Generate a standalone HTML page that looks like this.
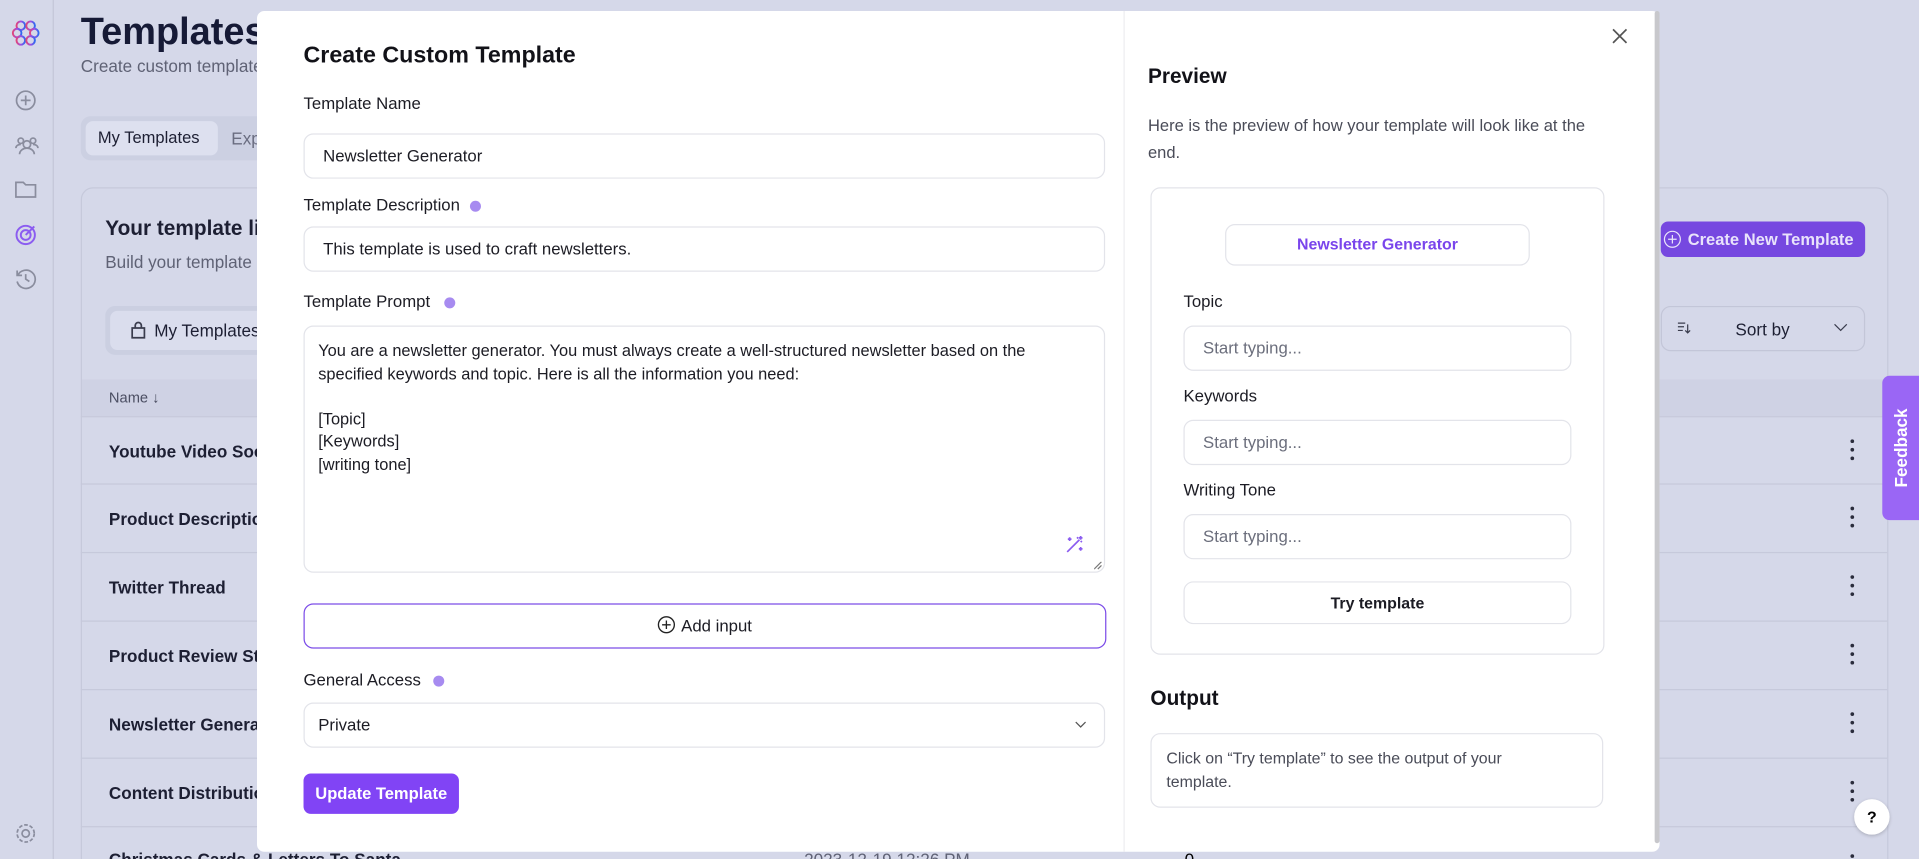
<!DOCTYPE html>
<html><head><meta charset="utf-8">
<style>
*{box-sizing:border-box;margin:0;padding:0;white-space:nowrap}
html,body{width:1919px;height:859px;overflow:hidden;background:#d5d8e9;font-family:"Liberation Sans",sans-serif;}
#root{position:absolute;left:0;top:0;width:1568px;height:702px;transform:scale(1.22385);transform-origin:0 0;background:#d5d8e9;overflow:hidden}
.a{position:absolute}
.sb{left:0;top:0;width:44px;height:702px;border-right:1px solid #c3c6d8;}
.ic{stroke:#8a8d9e;fill:none;stroke-width:1.4}
.row{left:66px;width:1476px;height:56px;border-top:1px solid #c6c9db;}
.rt{position:absolute;left:23px;top:20px;font-size:14px;font-weight:bold;color:#1d1f33;}
.keb{position:absolute;left:1446px;top:18px;width:3px;}
.keb i{display:block;width:3px;height:3px;background:#2a2c3c;border-radius:2px;margin-bottom:4px}
.modal{left:210px;top:9px;width:1146px;height:687px;background:#fff;border-radius:6px;}
.lbl{font-size:13.7px;color:#1c1c24;}
.inp{border:1px solid #e3e4ea;border-radius:8px;background:#fff;font-size:13.7px;color:#1c1c24;}
.dot{display:inline-block;width:9px;height:9px;border-radius:50%;background:#a78bf0;vertical-align:middle;margin-left:8px;}
.ph{color:#6b6e7c}
.wrap{white-space:normal}
</style></head><body><div id="root">
<div class="a sb"></div>
<svg class="a" style="left:9px;top:15px" width="24" height="24" viewBox="0 0 24 24"><defs><linearGradient id="g" x1="0" x2="1"><stop offset="0" stop-color="#e0457b"/><stop offset=".5" stop-color="#9b4ee6"/><stop offset="1" stop-color="#2f6bf0"/></linearGradient></defs><g fill="none" stroke="url(#g)" stroke-width="1.6"><circle cx="8" cy="6" r="3.5"/><circle cx="16" cy="6" r="3.5"/><circle cx="5" cy="12" r="3.5"/><circle cx="19" cy="12" r="3.5"/><circle cx="8" cy="18" r="3.5"/><circle cx="16" cy="18" r="3.5"/></g></svg>
<svg class="a" style="left:12px;top:73px" width="18" height="18"><circle class="ic" cx="9" cy="9" r="7.5"/><path class="ic" d="M9 5v8M5 9h8"/></svg>
<svg class="a" style="left:12px;top:110px" width="20" height="18"><circle class="ic" cx="10" cy="8" r="3"/><circle class="ic" cx="5" cy="5" r="2.2"/><circle class="ic" cx="15" cy="5" r="2.2"/><path class="ic" d="M4 16c0-3 3-5 6-5s6 2 6 5M1 11c0-2 2-3 4-3M19 11c0-2-2-3-4-3"/></svg>
<svg class="a" style="left:12px;top:147px" width="18" height="16"><path class="ic" d="M1 2h6l2 2h8v10H1z"/></svg>
<svg class="a" style="left:12px;top:183px" width="18" height="18"><circle cx="9" cy="9" r="7.5" fill="none" stroke="#8b5cf0" stroke-width="1.6"/><circle cx="9" cy="9" r="4" fill="none" stroke="#8b5cf0" stroke-width="1.6"/><path d="M9 9l7-7" stroke="#8b5cf0" stroke-width="1.6"/></svg>
<svg class="a" style="left:12px;top:219px" width="18" height="18"><path class="ic" d="M2.5 6A7.5 7.5 0 1 1 2 11M2 2v4h4M9 5v4l3 2"/></svg>
<svg class="a" style="left:12px;top:672px" width="18" height="18"><circle class="ic" cx="9" cy="9" r="3"/><circle class="ic" cx="9" cy="9" r="7" stroke-dasharray="3 1.5"/></svg>

<div class="a" style="left:66px;top:8px;font-size:31px;font-weight:bold;color:#161a36">Templates</div>
<div class="a" style="left:66px;top:46px;font-size:14px;color:#5f6275">Create custom templates</div>
<div class="a" style="left:66px;top:95px;width:200px;height:36px;background:#ccd0e2;border-radius:8px"></div>
<div class="a" style="left:70px;top:99px;width:108px;height:28px;background:#dde0ef;border-radius:6px;font-size:13.5px;color:#1d1f33;padding:6px 10px">My Templates</div>
<div class="a" style="left:189px;top:105px;font-size:14px;color:#6a6d80">Exp</div>

<div class="a" style="left:66px;top:153px;width:1477px;height:560px;border:1px solid #c6c9db;border-radius:10px"></div>
<div class="a" style="left:86px;top:177px;font-size:17px;font-weight:bold;color:#1d1f33">Your template library</div>
<div class="a" style="left:86px;top:206px;font-size:14px;color:#5f6275">Build your template library</div>
<div class="a" style="left:86px;top:250px;width:200px;height:40px;background:#cbcfe1;border-radius:8px"></div>
<div class="a" style="left:90px;top:254px;width:200px;height:32px;background:#dadded;border-radius:6px;font-size:14px;color:#1d1f33;padding:8px 0 0 36px">My Templates</div>
<svg class="a" style="left:106px;top:262px" width="14" height="15"><path class="ic" d="M2 6h10v8H2zM4.5 6V4a2.5 2.5 0 0 1 5 0v2" style="stroke:#3a3c4d"/></svg>
<div class="a" style="left:1357px;top:181px;width:167px;height:29px;background:#7648e0;border-radius:6px;color:#e9e3fb;font-size:13.5px;font-weight:bold;padding:7px 0 0 22px">Create New Template</div>
<svg class="a" style="left:1359px;top:188px" width="15" height="15"><circle cx="7.5" cy="7.5" r="6.5" fill="none" stroke="#e9e3fb"/><path d="M7.5 4v7M4 7.5h7" stroke="#e9e3fb"/></svg>
<div class="a" style="left:1357px;top:250px;width:167px;height:37px;border:1px solid #c3c6d8;border-radius:8px;font-size:14px;color:#1d1f33;padding:10px 0 0 60px">Sort by</div>
<svg class="a" style="left:1370px;top:262px" width="12" height="12"><path d="M1 2h6M1 5h5M1 8h4M9 3v7M7 8l2 2 2-2" stroke="#3a3c4d" fill="none"/></svg>
<svg class="a" style="left:1498px;top:264px" width="12" height="8"><path d="M1 1l5 5 5-5" stroke="#3a3c4d" fill="none"/></svg>
<div class="a" style="left:67px;top:310px;width:1475px;height:30px;background:#cfd2e4"></div>
<div class="a" style="left:89px;top:318px;font-size:12px;color:#4b4e62">Name &#8595;</div>
<div class="a row" style="top:340px"><span class="rt">Youtube Video Social</span><div class="keb"><i></i><i></i><i></i></div></div>
<div class="a row" style="top:395px"><span class="rt">Product Description</span><div class="keb"><i></i><i></i><i></i></div></div>
<div class="a row" style="top:451px"><span class="rt">Twitter Thread</span><div class="keb"><i></i><i></i><i></i></div></div>
<div class="a row" style="top:507px"><span class="rt">Product Review Structure</span><div class="keb"><i></i><i></i><i></i></div></div>
<div class="a row" style="top:563px"><span class="rt">Newsletter Generator</span><div class="keb"><i></i><i></i><i></i></div></div>
<div class="a row" style="top:619px"><span class="rt">Content Distribution</span><div class="keb"><i></i><i></i><i></i></div></div>
<div class="a row" style="top:675px"><span class="rt" style="top:18px">Christmas Cards &amp; Letters To Santa</span><span style="position:absolute;left:591px;top:18px;font-size:14px;color:#5f6275">2023-12-19 12:26 PM</span><span style="position:absolute;left:902px;top:18px;font-size:14px">0</span><div class="keb" style="top:22px"><i></i><i></i><i></i></div></div>

<div class="a" style="left:1538px;top:307px;width:30px;height:118px;background:#9a66f5;border-radius:6px 0 0 6px"></div>
<div class="a" style="left:1538px;top:307px;width:30px;height:118px;display:flex;align-items:center;justify-content:center"><span style="transform:rotate(-90deg);color:#fff;font-weight:bold;font-size:14px;white-space:nowrap">Feedback</span></div>
<div class="a" style="left:1515px;top:653px;width:29px;height:29px;border-radius:50%;background:#fff;box-shadow:0 1px 3px rgba(0,0,0,.2);font-size:13px;font-weight:bold;text-align:center;line-height:29px">?</div>

<div class="a modal">
 <div class="a" style="left:708px;top:0;width:1px;height:687px;background:#ececf0"></div>
 <div class="a" style="left:1142px;top:0;width:4px;height:680px;background:#c8c8cc;border-radius:2px"></div>
 <div class="a" style="left:38px;top:26px;font-size:19px;font-weight:bold;color:#121218">Create Custom Template</div>
 <div class="a lbl" style="left:38px;top:68px">Template Name</div>
 <div class="a inp" style="left:38px;top:100px;width:655px;height:37px;padding:10px 15px">Newsletter Generator</div>
 <div class="a lbl" style="left:38px;top:151px">Template Description<span class="dot"></span></div>
 <div class="a inp" style="left:38px;top:176px;width:655px;height:37px;padding:10px 15px">This template is used to craft newsletters.</div>
 <div class="a lbl" style="left:38px;top:230px">Template Prompt<span class="dot" style="margin-left:12px"></span></div>
 <div class="a inp wrap" style="left:38px;top:257px;width:655px;height:202px;padding:11px 11px;line-height:18.5px;font-size:13.4px">You are a newsletter generator. You must always create a well-structured newsletter based on the specified keywords and topic. Here is all the information you need:<br><br>[Topic]<br>[Keywords]<br>[writing tone]</div>
 <svg class="a" style="left:660px;top:428px" width="16" height="16"><path d="M2 14L12 4M10 2l1 1M14 6l-1-1M13 1v3M11.5 2.5h3M4 2v3M2.5 3.5h3M13 10v3M11.5 11.5h3" stroke="#8b5cf0" stroke-width="1.4" fill="none"/></svg>
 <svg class="a" style="left:684px;top:450px" width="7" height="7"><path d="M6 0L0 6M6 3L3 6" stroke="#777" fill="none"/></svg>
 <div class="a" style="left:38px;top:484px;width:656px;height:37px;border:1px solid #7c4de8;border-radius:8px;font-size:13.7px;color:#1c1c24;text-align:center;padding-top:10px">&nbsp;&nbsp;&nbsp;&nbsp;&nbsp;Add input</div>
 <svg class="a" style="left:327px;top:494px" width="15" height="15"><circle cx="7.5" cy="7.5" r="6.5" fill="none" stroke="#222" stroke-width="1.1"/><path d="M7.5 4v7M4 7.5h7" stroke="#222" stroke-width="1.1"/></svg>
 <div class="a lbl" style="left:38px;top:539px">General Access<span class="dot" style="margin-left:10px"></span></div>
 <div class="a inp" style="left:38px;top:565px;width:655px;height:37px;padding:10px 11px">Private</div>
 <svg class="a" style="left:668px;top:580px" width="10" height="7"><path d="M1 1l4 4 4-4" stroke="#555" fill="none"/></svg>
 <div class="a" style="left:38px;top:623px;width:127px;height:33px;background:#8144f5;border-radius:6px;color:#fff;font-size:13.5px;font-weight:bold;text-align:center;line-height:33px">Update Template</div>

 <svg class="a" style="left:1107px;top:14px" width="13" height="13"><path d="M1 1l11 11M12 1L1 12" stroke="#555" stroke-width="1.4"/></svg>
 <div class="a" style="left:728px;top:44px;font-size:17px;font-weight:bold;color:#121218">Preview</div>
 <div class="a wrap" style="left:728px;top:83px;width:380px;font-size:13.5px;line-height:22px;color:#4a4c58">Here is the preview of how your template will look like at the end.</div>
 <div class="a" style="left:730px;top:144px;width:371px;height:382px;border:1px solid #e3e4ea;border-radius:8px"></div>
 <div class="a" style="left:791px;top:174px;width:249px;height:34px;border:1px solid #e3e4ea;border-radius:8px;text-align:center;line-height:32px;color:#7a45ec;font-size:13px;font-weight:bold">Newsletter Generator</div>
 <div class="a lbl" style="left:757px;top:230px">Topic</div>
 <div class="a inp ph" style="left:757px;top:257px;width:317px;height:37px;padding:10px 15px">Start typing...</div>
 <div class="a lbl" style="left:757px;top:307px">Keywords</div>
 <div class="a inp ph" style="left:757px;top:334px;width:317px;height:37px;padding:10px 15px">Start typing...</div>
 <div class="a lbl" style="left:757px;top:384px">Writing Tone</div>
 <div class="a inp ph" style="left:757px;top:411px;width:317px;height:37px;padding:10px 15px">Start typing...</div>
 <div class="a inp" style="left:757px;top:466px;width:317px;height:35px;text-align:center;line-height:33px;font-weight:bold;font-size:13px">Try template</div>
 <div class="a" style="left:730px;top:552px;font-size:17px;font-weight:bold;color:#121218">Output</div>
 <div class="a wrap" style="left:730px;top:590px;width:370px;height:61px;border:1px solid #e3e4ea;border-radius:8px;padding:10px 60px 10px 12px;font-size:13px;line-height:19px;color:#4a4c58">Click on “Try template” to see the output of your template.</div>
</div>
</div></body></html>
